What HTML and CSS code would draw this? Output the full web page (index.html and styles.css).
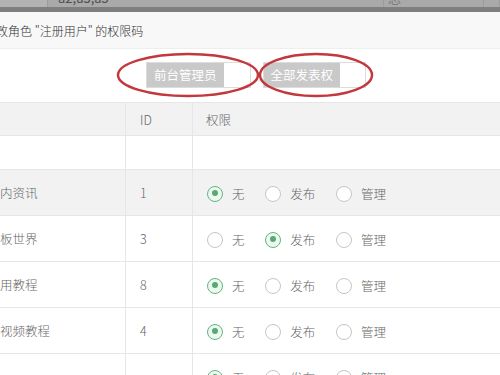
FILE: index.html
```html
<!DOCTYPE html>
<html lang="zh-CN">
<head>
    <meta charset="UTF-8">
    <meta name="viewport" content="width=device-width, initial-scale=1.0">
    <title>权限码</title>
<link rel="stylesheet" href="styles.css">
</head>
<body>
    <div class="behind">
        <div class="behind-cells">
            <div class="bcell bcell-a"></div>
            <div class="bcell bcell-b"><span>a2,a3,a5</span></div>
            <div class="bcell bcell-c"><span>总</span></div>
            <div class="bcell bcell-d"></div>
        </div>
        <div class="behind-bar"></div>
    </div>

    <div class="modal">
        <div class="modal-title"><span>修改角色 "注册用户" 的权限码</span></div>

        <div class="btn-row">
            <div class="chk chk-one"><span>前台管理员</span><i></i></div>
            <div class="chk chk-two"><span>全部发表权</span><i></i></div>
            <svg class="marks" width="500" height="52" viewBox="0 0 500 52">
                <ellipse cx="188" cy="26" rx="70" ry="21" fill="none" stroke="#c2383c" stroke-width="2.5"/>
                <ellipse cx="316" cy="26" rx="56" ry="21" fill="none" stroke="#c2383c" stroke-width="2.5"/>
            </svg>
        </div>

        <table class="perm">
            <colgroup>
                <col class="c-name">
                <col class="c-id">
                <col class="c-perm">
            </colgroup>
            <tr class="head">
                <th></th>
                <th>ID</th>
                <th>权限</th>
            </tr>
            <tr class="blank">
                <td></td><td></td><td></td>
            </tr>
            <tr class="row grey">
                <td>内资讯</td>
                <td>1</td>
                <td>
                    <label class="radio on"><b></b>无</label>
                    <label class="radio"><b></b>发布</label>
                    <label class="radio"><b></b>管理</label>
                </td>
            </tr>
            <tr class="row">
                <td>板世界</td>
                <td>3</td>
                <td>
                    <label class="radio"><b></b>无</label>
                    <label class="radio on"><b></b>发布</label>
                    <label class="radio"><b></b>管理</label>
                </td>
            </tr>
            <tr class="row">
                <td>用教程</td>
                <td>8</td>
                <td>
                    <label class="radio on"><b></b>无</label>
                    <label class="radio"><b></b>发布</label>
                    <label class="radio"><b></b>管理</label>
                </td>
            </tr>
            <tr class="row">
                <td>视频教程</td>
                <td>4</td>
                <td>
                    <label class="radio on"><b></b>无</label>
                    <label class="radio"><b></b>发布</label>
                    <label class="radio"><b></b>管理</label>
                </td>
            </tr>
            <tr class="row">
                <td></td>
                <td></td>
                <td>
                    <label class="radio on"><b></b>无</label>
                    <label class="radio"><b></b>发布</label>
                    <label class="radio"><b></b>管理</label>
                </td>
            </tr>
        </table>
    </div>
</body>
</html>
```

FILE: styles.css
```css
body {
    margin: 0;
    width: 500px;
    height: 375px;
    overflow: hidden;
    background-color: #ffffff;
    font-family: "Noto Sans CJK SC", "Liberation Sans", sans-serif;
    color: #666666;
}

/* page behind the dialog */
.behind {
    height: 12px;
    overflow: hidden;
}

.behind-cells {
    display: flex;
    height: 7px;
    background-color: #a9a9a9;
    overflow: hidden;
}

.bcell {
    box-sizing: border-box;
    height: 7px;
    border-right: 1px solid #9c9c9c;
    font-size: 13px;
    line-height: 14px;
    color: #505050;
}

.bcell span {
    display: block;
    margin-top: -9px;
}

.bcell-a {
    width: 48px;
    background-color: #b3b3b3;
}

.bcell-b {
    width: 336px;
    padding-left: 10px;
}

.bcell-c {
    width: 100px;
    padding-left: 4px;
    color: #7a7a7a;
}

.bcell-d {
    flex: 1;
}

.behind-bar {
    height: 5px;
    background-color: #7f7f7f;
}

/* dialog */
.modal-title {
    height: 36px;
    line-height: 37px;
    background-color: #f8f8f8;
    border-bottom: 1px solid #eeeeee;
    font-size: 12px;
    font-weight: 300;
    color: #333333;
    white-space: nowrap;
}

.modal-title span {
    margin-left: -16px;
}

.btn-row {
    position: relative;
    display: flex;
    gap: 12px;
    padding: 13px 0 0 146px;
    height: 26px;
}

.chk {
    display: flex;
    box-sizing: border-box;
    height: 26px;
    border: 1px solid #dcdcdc;
    font-size: 12.5px;
    line-height: 24px;
}

.chk span {
    background-color: #c9c9c9;
    color: #ffffff;
    padding: 0 7px;
}

.chk i {
    background-color: #ffffff;
}

.chk-one i {
    width: 26px;
}

.chk-two i {
    width: 25px;
}

.marks {
    position: absolute;
    left: 0;
    top: 0;
    pointer-events: none;
}

/* permission table */
.perm {
    margin-top: 14px;
    margin-left: -1px;
    width: 520px;
    table-layout: fixed;
    border-collapse: collapse;
    font-size: 12.5px;
    font-weight: 300;
    color: #666666;
}

.c-name {
    width: 126px;
}

.c-id {
    width: 67px;
}

.perm th,
.perm td {
    border: 1px solid #e6e6e6;
    padding: 0;
    text-align: left;
    font-weight: 300;
    white-space: nowrap;
}

.perm td:nth-child(2),
.perm th:nth-child(2) {
    padding-left: 14px;
}

.perm td:nth-child(3),
.perm th:nth-child(3) {
    padding-left: 13px;
}

.head {
    height: 33px;
    background-color: #f2f2f2;
}

.blank {
    height: 34px;
}

.row {
    height: 46px;
}

.grey {
    background-color: #f2f2f2;
}

.radio {
    display: inline-flex;
    align-items: center;
    margin-right: 17px;
    vertical-align: middle;
}

.radio b {
    box-sizing: border-box;
    width: 16px;
    height: 16px;
    margin: 0 9px 0 1px;
    border: 1px solid #c6c6c6;
    border-radius: 50%;
    background-color: #ffffff;
    position: relative;
}

.radio.on b {
    border: 1.5px solid #5fb878;
    background-color: #eef8f1;
}

.radio.on b::after {
    content: "";
    position: absolute;
    left: 3.5px;
    top: 3.5px;
    width: 6px;
    height: 6px;
    border-radius: 50%;
    background-color: #5aa874;
}
```
